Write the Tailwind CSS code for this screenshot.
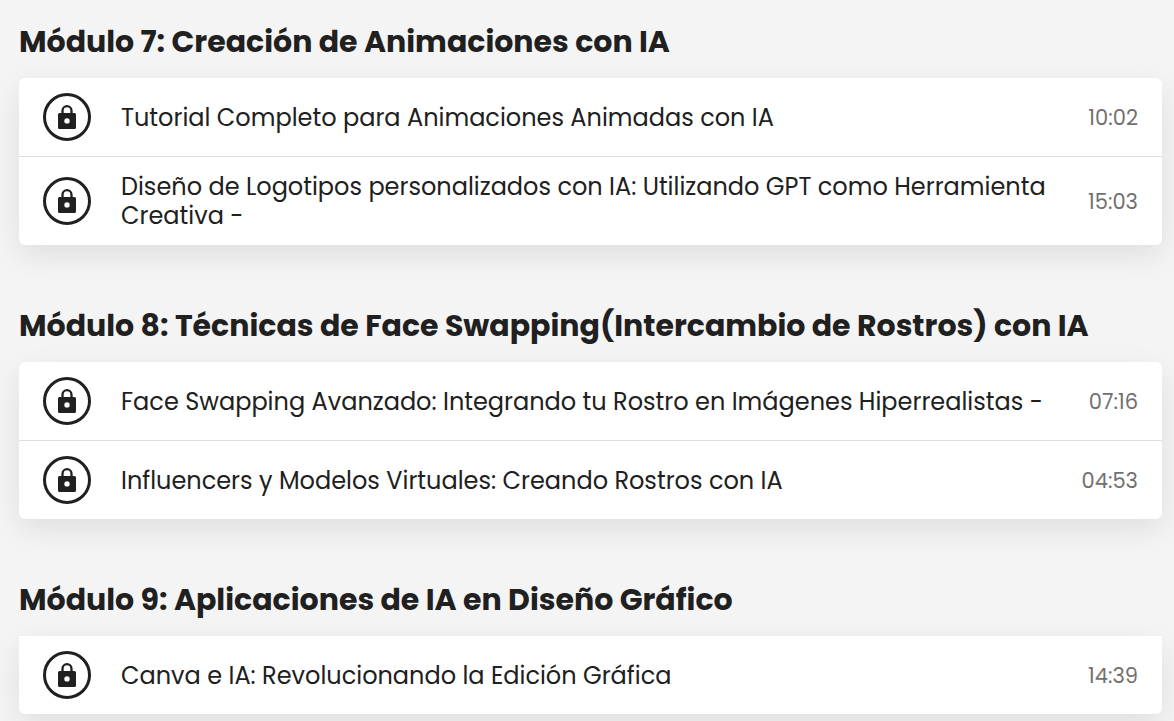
<!DOCTYPE html>
<html lang="es">
<head>
  <meta charset="utf-8" />
  <meta name="viewport" content="width=device-width, initial-scale=1" />
  <title>Contenido del curso</title>
  <script src="https://cdn.jsdelivr.net/npm/@tailwindcss/browser@4"></script>
</head>
<body class="bg-[#f4f4f4] text-[#202020] font-[Poppins,Inter,sans-serif]">
  <!-- Lock icon shared by every lesson -->
  <svg class="hidden" xmlns="http://www.w3.org/2000/svg">
    <symbol id="lock" viewBox="0 0 18 24">
      <path d="M4.500 9V5.700a4.500 4.500 0 0 1 9 0V9" fill="none" stroke="currentColor" stroke-width="2.300" />
      <path fill="currentColor" fill-rule="evenodd" d="M1.500 8h15A1.500 1.500 0 0 1 18 9.500v13a1.500 1.500 0 0 1-1.500 1.500h-15A1.500 1.500 0 0 1 0 22.500v-13A1.500 1.500 0 0 1 1.500 8zM9 13.200a2.700 2.700 0 1 0 0 5.400a2.700 2.700 0 0 0 0-5.400z" />
    </symbol>
  </svg>

  <main class="pt-6 pb-2 pl-[19px] pr-3">
    <section class="mb-[63px]">
      <h2 class="mb-[18px] text-3xl leading-9 font-bold">Módulo 7: Creación de Animaciones con IA</h2>
      <ul class="rounded-md bg-white shadow-[0_10px_30px_rgba(0,0,0,0.09)] divide-y divide-[#dedede]">
        <li class="flex items-center gap-[30px] px-6 py-[15px]">
          <span class="flex size-12 shrink-0 items-center justify-center rounded-full border-3 border-[#202020]">
            <svg class="h-6 w-[18px]" aria-hidden="true"><use href="#lock" /></svg>
          </span>
          <p class="flex-1 text-2xl leading-[29px]">Tutorial Completo para Animaciones Animadas con IA</p>
          <time class="text-[21px] leading-[29px] text-[#707070]">10:02</time>
        </li>
        <li class="flex items-center gap-[30px] px-6 py-[15px]">
          <span class="flex size-12 shrink-0 items-center justify-center rounded-full border-3 border-[#202020]">
            <svg class="h-6 w-[18px]" aria-hidden="true"><use href="#lock" /></svg>
          </span>
          <p class="flex-1 text-2xl leading-[29px]">Diseño de Logotipos personalizados con IA: Utilizando GPT como Herramienta Creativa -</p>
          <time class="text-[21px] leading-[29px] text-[#707070]">15:03</time>
        </li>
      </ul>
    </section>

    <section class="mb-[63px]">
      <h2 class="mb-[18px] text-3xl leading-9 font-bold">Módulo 8: Técnicas de Face Swapping(Intercambio de Rostros) con IA</h2>
      <ul class="rounded-md bg-white shadow-[0_10px_30px_rgba(0,0,0,0.09)] divide-y divide-[#dedede]">
        <li class="flex items-center gap-[30px] px-6 py-[15px]">
          <span class="flex size-12 shrink-0 items-center justify-center rounded-full border-3 border-[#202020]">
            <svg class="h-6 w-[18px]" aria-hidden="true"><use href="#lock" /></svg>
          </span>
          <p class="flex-1 text-2xl leading-[29px]">Face Swapping Avanzado: Integrando tu Rostro en Imágenes Hiperrealistas -</p>
          <time class="text-[21px] leading-[29px] text-[#707070]">07:16</time>
        </li>
        <li class="flex items-center gap-[30px] px-6 py-[15px]">
          <span class="flex size-12 shrink-0 items-center justify-center rounded-full border-3 border-[#202020]">
            <svg class="h-6 w-[18px]" aria-hidden="true"><use href="#lock" /></svg>
          </span>
          <p class="flex-1 text-2xl leading-[29px]">Influencers y Modelos Virtuales: Creando Rostros con IA</p>
          <time class="text-[21px] leading-[29px] text-[#707070]">04:53</time>
        </li>
      </ul>
    </section>

    <section>
      <h2 class="mb-[18px] text-3xl leading-9 font-bold">Módulo 9: Aplicaciones de IA en Diseño Gráfico</h2>
      <ul class="rounded-b-md bg-white shadow-[0_10px_30px_rgba(0,0,0,0.09)] divide-y divide-[#dedede]">
        <li class="flex items-center gap-[30px] px-6 py-[15px]">
          <span class="flex size-12 shrink-0 items-center justify-center rounded-full border-3 border-[#202020]">
            <svg class="h-6 w-[18px]" aria-hidden="true"><use href="#lock" /></svg>
          </span>
          <p class="flex-1 text-2xl leading-[29px]">Canva e IA: Revolucionando la Edición Gráfica</p>
          <time class="text-[21px] leading-[29px] text-[#707070]">14:39</time>
        </li>
      </ul>
    </section>
  </main>
</body>
</html>
